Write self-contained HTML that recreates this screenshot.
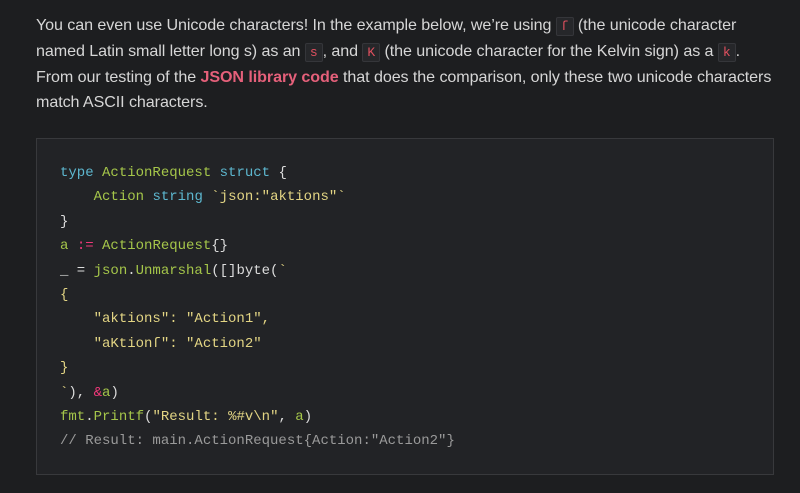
<!DOCTYPE html>
<html><head><meta charset="utf-8"><style>
html,body{margin:0;padding:0;background:#1d1e20;width:800px;height:493px;overflow:hidden}
p{position:absolute;left:36px;top:13px;width:780px;margin:0;font-family:"Liberation Sans",sans-serif;font-size:16.1px;line-height:25px;color:#d6d6d6;white-space:nowrap;letter-spacing:-0.08px}
code.i{font-family:"Liberation Mono",monospace;font-size:13px;color:#e0505f;background:#26272a;border:1px solid #35363a;padding:1px 4px;border-radius:2px}
a{color:#e5607a;font-weight:bold;text-decoration:none}
.box{position:absolute;left:36px;top:138px;width:738px;height:337px;background:#222326;border:1px solid #38393c;box-sizing:border-box}
pre{position:absolute;left:23px;top:22px;margin:0;font-family:"Liberation Mono",monospace;font-size:14px;line-height:24.4px;color:#dcdcdc}
.k{color:#5db7cf}.g{color:#a5c64a}.s{color:#e3d584}.o{color:#f2387a}.c{color:#9a9a9a}
</style></head><body>
<p>You can even use Unicode characters! In the example below, we’re using <code class="i">ſ</code> (the unicode character<br>named Latin small letter long s) as an <code class="i">s</code>, and <code class="i">K</code> (the unicode character for the Kelvin sign) as a <code class="i">k</code>.<br>From our testing of the <a>JSON library code</a> that does the comparison, only these two unicode characters<br>match ASCII characters.</p>
<div class="box"><pre><span class="k">type</span> <span class="g">ActionRequest</span> <span class="k">struct</span> {
    <span class="g">Action</span> <span class="k">string</span> <span class="s">`json:"aktions"`</span>
}
<span class="g">a</span> <span class="o">:=</span> <span class="g">ActionRequest</span>{}
_ = <span class="g">json</span>.<span class="g">Unmarshal</span>([]byte(<span class="s">`
{
    "aktions": "Action1",
    "aKtionſ": "Action2"
}
`</span>), <span class="o">&amp;</span><span class="g">a</span>)
<span class="g">fmt</span>.<span class="g">Printf</span>(<span class="s">"Result: %#v\n"</span>, <span class="g">a</span>)
<span class="c">// Result: main.ActionRequest{Action:"Action2"}</span></pre></div>
</body></html>
